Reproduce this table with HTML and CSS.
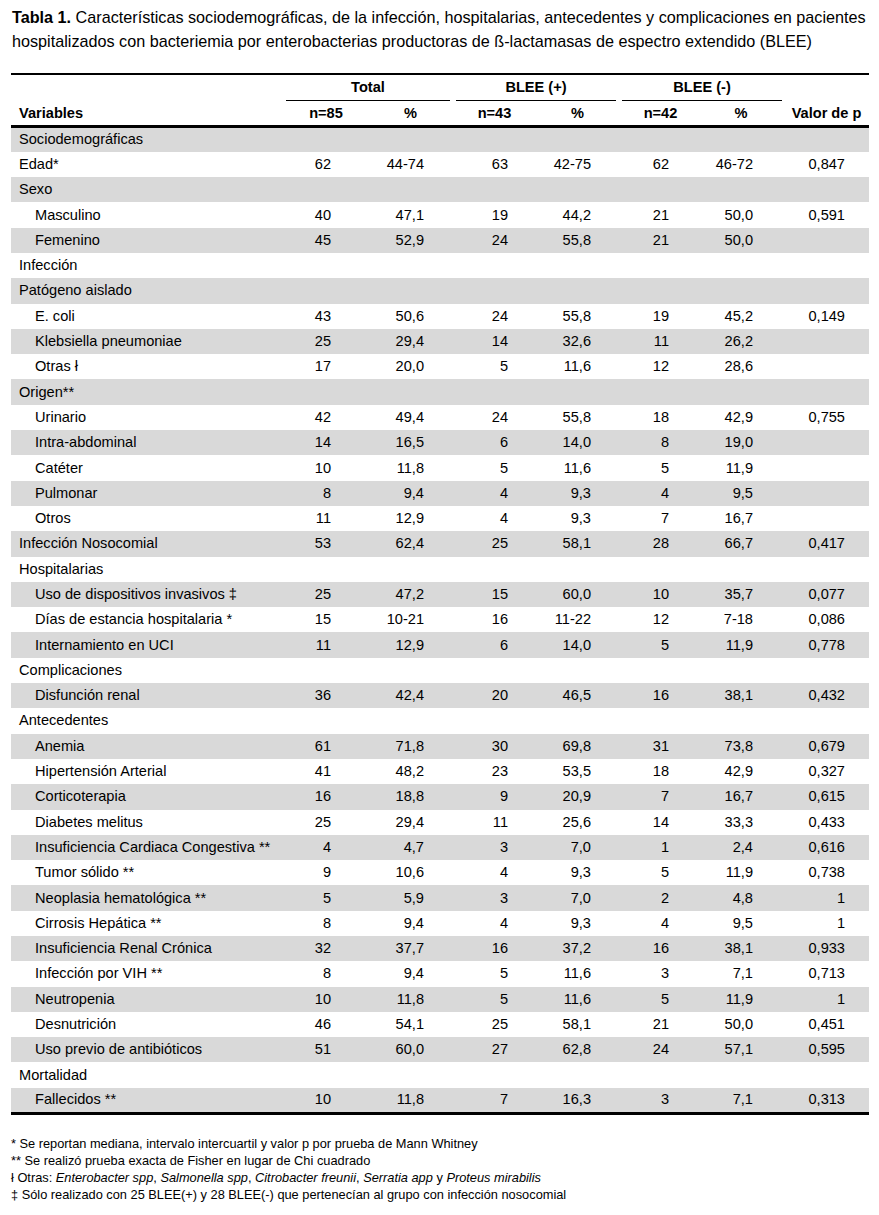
FILE: index.html
```html
<!DOCTYPE html>
<html lang="es">
<head>
<meta charset="utf-8">
<title>Tabla 1</title>
<link rel="stylesheet" href="styles.css">
</head>
<body>
<div class="page">
<p class="title"><b>Tabla 1.</b> Características sociodemográficas, de la infección, hospitalarias, antecedentes y complicaciones en pacientes<br>hospitalizados con bacteriemia por enterobacterias productoras de ß-lactamasas de espectro extendido (BLEE)</p>

<table class="data">
<colgroup>
<col class="c1"><col class="c2"><col class="c3"><col class="c4"><col class="c5"><col class="c6"><col class="c7"><col class="c8">
</colgroup>
<thead>
<tr class="hr1">
<th rowspan="2" class="hvar">Variables</th>
<th colspan="2" class="grp"><span class="gl gl-total">Total</span></th>
<th colspan="2" class="grp"><span class="gl gl-pos">BLEE (+)</span></th>
<th colspan="2" class="grp"><span class="gl gl-neg">BLEE (-)</span></th>
<th rowspan="2" class="hp">Valor de p</th>
</tr>
<tr class="hr2">
<th>n=85</th><th>%</th><th>n=43</th><th>%</th><th>n=42</th><th>%</th>
</tr>
</thead>
<tbody>
<tr><td>Sociodemográficas</td><td></td><td></td><td></td><td></td><td></td><td></td><td></td></tr>
<tr><td>Edad*</td><td>62</td><td>44-74</td><td>63</td><td>42-75</td><td>62</td><td>46-72</td><td>0,847</td></tr>
<tr><td>Sexo</td><td></td><td></td><td></td><td></td><td></td><td></td><td></td></tr>
<tr><td class="in">Masculino</td><td>40</td><td>47,1</td><td>19</td><td>44,2</td><td>21</td><td>50,0</td><td>0,591</td></tr>
<tr><td class="in">Femenino</td><td>45</td><td>52,9</td><td>24</td><td>55,8</td><td>21</td><td>50,0</td><td></td></tr>
<tr><td>Infección</td><td></td><td></td><td></td><td></td><td></td><td></td><td></td></tr>
<tr><td>Patógeno aislado</td><td></td><td></td><td></td><td></td><td></td><td></td><td></td></tr>
<tr><td class="in">E. coli</td><td>43</td><td>50,6</td><td>24</td><td>55,8</td><td>19</td><td>45,2</td><td>0,149</td></tr>
<tr><td class="in">Klebsiella pneumoniae</td><td>25</td><td>29,4</td><td>14</td><td>32,6</td><td>11</td><td>26,2</td><td></td></tr>
<tr><td class="in">Otras ł</td><td>17</td><td>20,0</td><td>5</td><td>11,6</td><td>12</td><td>28,6</td><td></td></tr>
<tr><td>Origen**</td><td></td><td></td><td></td><td></td><td></td><td></td><td></td></tr>
<tr><td class="in">Urinario</td><td>42</td><td>49,4</td><td>24</td><td>55,8</td><td>18</td><td>42,9</td><td>0,755</td></tr>
<tr><td class="in">Intra-abdominal</td><td>14</td><td>16,5</td><td>6</td><td>14,0</td><td>8</td><td>19,0</td><td></td></tr>
<tr><td class="in">Catéter</td><td>10</td><td>11,8</td><td>5</td><td>11,6</td><td>5</td><td>11,9</td><td></td></tr>
<tr><td class="in">Pulmonar</td><td>8</td><td>9,4</td><td>4</td><td>9,3</td><td>4</td><td>9,5</td><td></td></tr>
<tr><td class="in">Otros</td><td>11</td><td>12,9</td><td>4</td><td>9,3</td><td>7</td><td>16,7</td><td></td></tr>
<tr><td>Infección Nosocomial</td><td>53</td><td>62,4</td><td>25</td><td>58,1</td><td>28</td><td>66,7</td><td>0,417</td></tr>
<tr><td>Hospitalarias</td><td></td><td></td><td></td><td></td><td></td><td></td><td></td></tr>
<tr><td class="in">Uso de dispositivos invasivos ‡</td><td>25</td><td>47,2</td><td>15</td><td>60,0</td><td>10</td><td>35,7</td><td>0,077</td></tr>
<tr><td class="in">Días de estancia hospitalaria *</td><td>15</td><td>10-21</td><td>16</td><td>11-22</td><td>12</td><td>7-18</td><td>0,086</td></tr>
<tr><td class="in">Internamiento en UCI</td><td>11</td><td>12,9</td><td>6</td><td>14,0</td><td>5</td><td>11,9</td><td>0,778</td></tr>
<tr><td>Complicaciones</td><td></td><td></td><td></td><td></td><td></td><td></td><td></td></tr>
<tr><td class="in">Disfunción renal</td><td>36</td><td>42,4</td><td>20</td><td>46,5</td><td>16</td><td>38,1</td><td>0,432</td></tr>
<tr><td>Antecedentes</td><td></td><td></td><td></td><td></td><td></td><td></td><td></td></tr>
<tr><td class="in">Anemia</td><td>61</td><td>71,8</td><td>30</td><td>69,8</td><td>31</td><td>73,8</td><td>0,679</td></tr>
<tr><td class="in">Hipertensión Arterial</td><td>41</td><td>48,2</td><td>23</td><td>53,5</td><td>18</td><td>42,9</td><td>0,327</td></tr>
<tr><td class="in">Corticoterapia</td><td>16</td><td>18,8</td><td>9</td><td>20,9</td><td>7</td><td>16,7</td><td>0,615</td></tr>
<tr><td class="in">Diabetes melitus</td><td>25</td><td>29,4</td><td>11</td><td>25,6</td><td>14</td><td>33,3</td><td>0,433</td></tr>
<tr><td class="in">Insuficiencia Cardiaca Congestiva **</td><td>4</td><td>4,7</td><td>3</td><td>7,0</td><td>1</td><td>2,4</td><td>0,616</td></tr>
<tr><td class="in">Tumor sólido **</td><td>9</td><td>10,6</td><td>4</td><td>9,3</td><td>5</td><td>11,9</td><td>0,738</td></tr>
<tr><td class="in">Neoplasia hematológica **</td><td>5</td><td>5,9</td><td>3</td><td>7,0</td><td>2</td><td>4,8</td><td>1</td></tr>
<tr><td class="in">Cirrosis Hepática **</td><td>8</td><td>9,4</td><td>4</td><td>9,3</td><td>4</td><td>9,5</td><td>1</td></tr>
<tr><td class="in">Insuficiencia Renal Crónica</td><td>32</td><td>37,7</td><td>16</td><td>37,2</td><td>16</td><td>38,1</td><td>0,933</td></tr>
<tr><td class="in">Infección por VIH **</td><td>8</td><td>9,4</td><td>5</td><td>11,6</td><td>3</td><td>7,1</td><td>0,713</td></tr>
<tr><td class="in">Neutropenia</td><td>10</td><td>11,8</td><td>5</td><td>11,6</td><td>5</td><td>11,9</td><td>1</td></tr>
<tr><td class="in">Desnutrición</td><td>46</td><td>54,1</td><td>25</td><td>58,1</td><td>21</td><td>50,0</td><td>0,451</td></tr>
<tr><td class="in">Uso previo de antibióticos</td><td>51</td><td>60,0</td><td>27</td><td>62,8</td><td>24</td><td>57,1</td><td>0,595</td></tr>
<tr><td>Mortalidad</td><td></td><td></td><td></td><td></td><td></td><td></td><td></td></tr>
<tr><td class="in">Fallecidos **</td><td>10</td><td>11,8</td><td>7</td><td>16,3</td><td>3</td><td>7,1</td><td>0,313</td></tr>
</tbody>
</table>

<div class="notes">
<p>* Se reportan mediana, intervalo intercuartil y valor p por prueba de Mann Whitney</p>
<p>** Se realizó prueba exacta de Fisher en lugar de Chi cuadrado</p>
<p>ł Otras: <i>Enterobacter spp</i>, <i>Salmonella spp</i>, <i>Citrobacter freunii</i>, <i>Serratia app</i> y <i>Proteus mirabilis</i></p>
<p>‡ Sólo realizado con 25 BLEE(+) y 28 BLEE(-) que pertenecían al grupo con infección nosocomial</p>
</div>
</div>
</body>
</html>
```

FILE: styles.css
```css
html, body {
  margin: 0;
  padding: 0;
  background: #ffffff;
}

body {
  font-family: "Liberation Sans", Arial, sans-serif;
  color: #000000;
}

.page {
  padding: 5px 10px 0 11px;
}

.title {
  margin: 0 -10px 20px 0;
  font-size: 16.2px;
  line-height: 24px;
  padding-left: 1px;
  white-space: nowrap;
}

.data {
  width: 858px;
  table-layout: fixed;
  border-collapse: collapse;
  border-spacing: 0;
  font-size: 14.6px;
}

.c1 { width: 273px; }
.c2 { width: 84px; }
.c3 { width: 85px; }
.c4 { width: 83px; }
.c5 { width: 83px; }
.c6 { width: 83px; }
.c7 { width: 78px; }
.c8 { width: 89px; }

.data thead {
  border-top: 2px solid #000;
  border-bottom: 3px solid #000;
}

.data th {
  font-weight: bold;
  padding: 0;
  text-align: center;
  white-space: nowrap;
}

.hr1 th {
  height: 26px;
  vertical-align: bottom;
}

.hr2 th {
  height: 24px;
  vertical-align: middle;
}

.data th.hvar {
  text-align: left;
  padding-left: 8px;
  vertical-align: bottom;
  padding-bottom: 4px;
}

.data th.hp {
  vertical-align: bottom;
  padding-bottom: 4px;
  padding-left: 4px;
}

.grp .gl {
  display: block;
  border-bottom: 1px solid #000;
  padding-bottom: 4px;
  line-height: 17px;
}

.gl-total { margin: 0 3px 0 2px; }
.gl-pos { margin: 0 3px 0 3px; }
.gl-neg { margin: 0 -2px 0 3px; }

.data tbody {
  border-bottom: 3px solid #000;
}

.data tbody tr {
  height: 25.3px;
}

.data tbody tr:nth-child(odd) {
  background: #d9d9d9;
}

.data td {
  padding: 0;
  text-align: right;
  white-space: nowrap;
  vertical-align: middle;
  line-height: 17px;
}

.data td:nth-child(1) { text-align: left; padding-left: 8px; }
.data td.in { padding-left: 24px; }
.data td:nth-child(2) { padding-right: 37px; }
.data td:nth-child(3) { padding-right: 29px; }
.data td:nth-child(4) { padding-right: 28px; }
.data td:nth-child(5) { padding-right: 28px; }
.data td:nth-child(6) { padding-right: 33px; }
.data td:nth-child(7) { padding-right: 27px; }
.data td:nth-child(8) { padding-right: 24px; }

.notes {
  margin-top: 20px;
  font-size: 12.8px;
  line-height: 17px;
}

.notes p {
  margin: 0;
}
```
